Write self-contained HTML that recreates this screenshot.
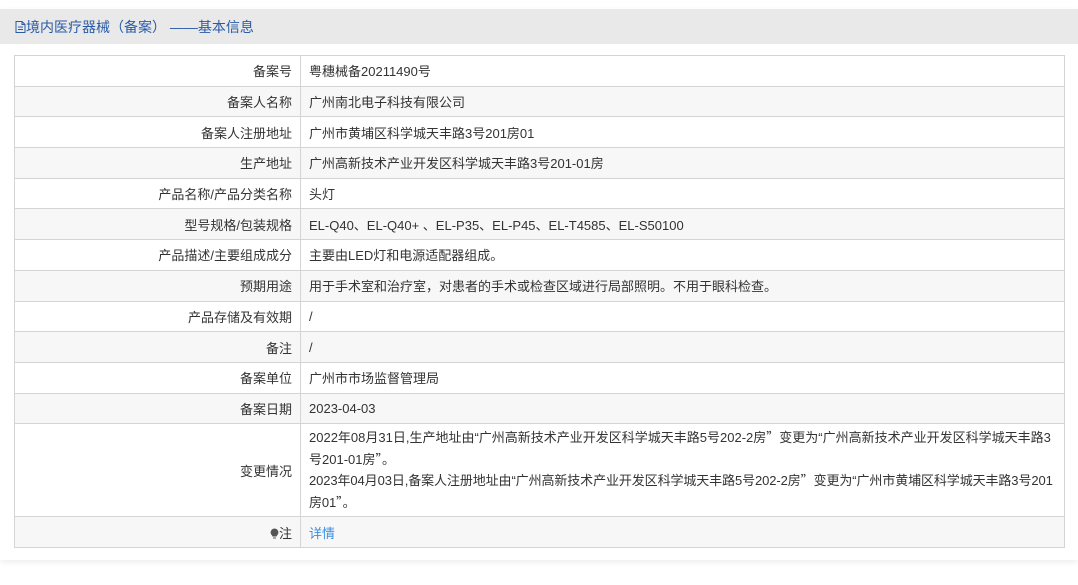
<!DOCTYPE html>
<html><head><meta charset="utf-8"><style>
body{margin:0;background:#fff;font-family:"Liberation Sans","Noto Sans CJK SC",sans-serif;font-size:13px;color:#333;}
.wrap{position:absolute;left:0;top:9px;width:1078px;height:551px;background:#fff;box-shadow:0 2px 6px rgba(0,0,0,0.08);}
.hd{height:35px;background:#e9e9e9;line-height:37px;padding-left:15px;color:#2a5ba6;font-size:14px;}
table{position:absolute;left:14px;top:46px;width:1051px;border-collapse:collapse;border:1px solid #ccc;}
td{border:1px solid #d4d4d4;height:29.7px;padding:0 8px;}
td.l{width:269px;text-align:right;}
tr:nth-child(even){background:#f7f7f7;}
td.b{line-height:20.5px;padding:3px 8px 3px;}
.q{font-family:"Noto Sans CJK SC",sans-serif;}
a{color:#3a8ee0;text-decoration:none;}
</style></head><body>
<div class="wrap">
<div class="hd"><svg width="11" height="12" viewBox="0 0 11 12" style="vertical-align:-1px"><path d="M1 .5h6l3 3v8H1z M7 .5v3h3 M3 6h5 M3 8.5h5" fill="none" stroke="#2a5ba6"/></svg>境内医疗器械（备案） ——基本信息</div>
<table>
<tr><td class="l">备案号</td><td>粤穗械备20211490号</td></tr>
<tr><td class="l">备案人名称</td><td>广州南北电子科技有限公司</td></tr>
<tr><td class="l">备案人注册地址</td><td>广州市黄埔区科学城天丰路3号201房01</td></tr>
<tr><td class="l">生产地址</td><td>广州高新技术产业开发区科学城天丰路3号201-01房</td></tr>
<tr><td class="l">产品名称/产品分类名称</td><td>头灯</td></tr>
<tr><td class="l">型号规格/包装规格</td><td>EL-Q40、EL-Q40+ 、EL-P35、EL-P45、EL-T4585、EL-S50100</td></tr>
<tr><td class="l">产品描述/主要组成成分</td><td>主要由LED灯和电源适配器组成。</td></tr>
<tr><td class="l">预期用途</td><td>用于手术室和治疗室，对患者的手术或检查区域进行局部照明。不用于眼科检查。</td></tr>
<tr><td class="l">产品存储及有效期</td><td>/</td></tr>
<tr><td class="l">备注</td><td>/</td></tr>
<tr><td class="l">备案单位</td><td>广州市市场监督管理局</td></tr>
<tr><td class="l">备案日期</td><td>2023-04-03</td></tr>
<tr><td class="l">变更情况</td><td class="b">2022年08月31日,生产地址由“广州高新技术产业开发区科学城天丰路5号202-2房<span class="q">”</span>变更为“广州高新技术产业开发区科学城天丰路3号201-01房<span class="q">”</span>。<br><span style="letter-spacing:-0.1px">2023年04月03日,备案人注册地址由“广州高新技术产业开发区科学城天丰路5号202-2房<span class="q">”</span>变更为“广州市黄埔区科学城天丰路3号201房01<span class="q">”</span>。</span></td></tr>
<tr><td class="l"><svg width="9" height="11" viewBox="0 0 9 11" style="vertical-align:-1px"><path d="M4.5 0.5a4 4 0 0 1 2.5 7l-.5 1h-4l-.5-1a4 4 0 0 1 2.5-7z M3 9.5h3v1h-3z" fill="#555"/></svg>注</td><td><a>详情</a></td></tr>
</table>
</div>
</body></html>
